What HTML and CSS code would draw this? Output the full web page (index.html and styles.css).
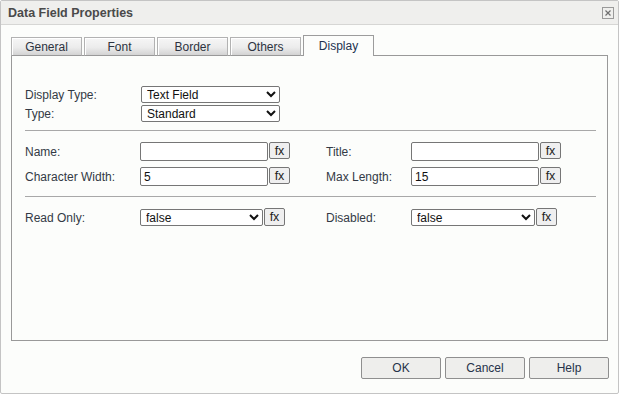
FILE: index.html
```html
<!DOCTYPE html>
<html>
<head>
<meta charset="utf-8">
<link rel="stylesheet" href="styles.css">
</head>
<body>
<div class="dialog">
  <div class="titlebar">
    <span class="title">Data Field Properties</span>
    <span class="close"><svg width="12" height="12" viewBox="0 0 12 12"><rect x="0.5" y="0.5" width="11" height="11" fill="none" stroke="#9a9a9a"/><path d="M3.5 3.5 L8.5 8.5 M8.5 3.5 L3.5 8.5" stroke="#6f6f6f" stroke-width="1.2"/></svg></span>
  </div>
  <div class="tabs">
    <div class="tab">General</div>
    <div class="tab">Font</div>
    <div class="tab">Border</div>
    <div class="tab">Others</div>
    <div class="tab active">Display</div>
  </div>
  <div class="panel">
    <div class="sec sec1">
      <label class="lbl">Display Type:</label>
      <select class="sel wide"><option>Text Field</option></select>
      <label class="lbl">Type:</label>
      <select class="sel wide"><option>Standard</option></select>
    </div>
    <div class="sep"></div>
    <div class="sec sec2">
      <label class="lbl">Name:</label>
      <div class="ctl"><input class="inp" type="text" value=""><button class="fx">fx</button></div>
      <label class="lbl">Title:</label>
      <div class="ctl"><input class="inp" type="text" value=""><button class="fx">fx</button></div>
      <label class="lbl">Character Width:</label>
      <div class="ctl"><input class="inp" type="text" value="5"><button class="fx">fx</button></div>
      <label class="lbl">Max Length:</label>
      <div class="ctl"><input class="inp" type="text" value="15"><button class="fx">fx</button></div>
    </div>
    <div class="sep"></div>
    <div class="sec sec3">
      <label class="lbl">Read Only:</label>
      <div class="ctl c3"><select class="sel narrow"><option>false</option></select><button class="fx fx3">fx</button></div>
      <label class="lbl">Disabled:</label>
      <div class="ctl c3"><select class="sel narrow2"><option>false</option></select><button class="fx fx3">fx</button></div>
    </div>
  </div>
  <div class="footer">
    <button class="btn">OK</button>
    <button class="btn">Cancel</button>
    <button class="btn">Help</button>
  </div>
</div>
</body>
</html>
```

FILE: styles.css
```css
* { box-sizing: border-box; }
html, body { margin: 0; padding: 0; background: #ffffff; }
body {
  font-family: "Liberation Sans", Arial, sans-serif;
  font-size: 12px;
  color: #333333;
}
.dialog {
  width: 619px;
  height: 394px;
  border: 1px solid #c4c4c4;
  border-radius: 2px;
  background: #fcfdfb;
}
.titlebar {
  height: 24px;
  background: #efefed;
  border-bottom: 1px solid #d6d6d4;
  display: flex;
  align-items: center;
  justify-content: space-between;
  padding: 0 4px 0 7px;
}
.title {
  font-weight: bold;
  color: #4a4a4a;
  font-size: 12.5px;
  padding-top: 1px;
}
.close { display: flex; width: 12px; height: 12px; margin-top: 1px; }
.tabs {
  display: flex;
  align-items: flex-end;
  margin: 10px 0 -1px 10px;
  height: 21px;
  position: relative;
  z-index: 1;
}
.tab {
  width: 71px;
  height: 19px;
  margin-right: 2px;
  border: 1px solid #b2b2b2;
  border-bottom-color: #999999;
  box-shadow: inset 1px 1px 0 #ffffff;
  background: linear-gradient(#f6f6f6, #ececec 55%, #d3d3d3);
  display: flex;
  align-items: center;
  justify-content: center;
  color: #2d3340;
  padding-top: 1px;
}
.tab.active {
  height: 21px;
  border-color: #9c9c9c;
  border-bottom: none;
  background: #fcfdfb;
  box-shadow: none;
  color: #22324f;
  padding-top: 0;
}
.panel {
  margin-left: 10px;
  width: 597px;
  height: 286px;
  border: 1px solid #999999;
  padding: 30px 11px 0 13px;
}
.sec {
  display: grid;
  grid-template-columns: 115px 186px 85px auto;
  align-items: center;
}
.sec1 {
  grid-template-columns: 115px auto;
  row-gap: 2px;
}
.sec2 { row-gap: 6px; margin-top: 11px; }
.sec3 { margin-top: 12px; }
.lbl { color: #333a45; }
.sep {
  height: 1px;
  background: #a8a8a8;
  margin-top: 8px;
}
.sec2 + .sep { margin-top: 10px; }
.sel {
  font-family: "Liberation Sans", Arial, sans-serif;
  font-size: 12px;
  color: #111111;
  height: 17px;
  border: 1px solid #767676;
  border-radius: 2px;
  background: #ffffff;
  padding: 0 0 0 1px;
  margin: 0;
}
.wide { width: 139px; margin-left: 1px; }
.narrow { width: 123px; }
.narrow2 { width: 124px; }
.ctl { display: flex; align-items: flex-start; }
.c3 { align-items: center; }
.inp {
  width: 128px;
  height: 19px;
  border: 1px solid #767676;
  border-radius: 2px;
  padding: 0 3px;
  margin: 0;
  font-family: "Liberation Sans", Arial, sans-serif;
  font-size: 12px;
  color: #111111;
  background: #ffffff;
}
.fx {
  width: 21px;
  height: 17px;
  margin: 0 0 0 1px;
  padding: 0;
  border: 1px solid #767676;
  border-radius: 2px;
  background: #efefef;
  font-family: "Liberation Sans", Arial, sans-serif;
  font-size: 12.5px;
  color: #222222;
  line-height: 14px;
}
.fx3 { height: 18px; margin-top: -2px; }
.footer {
  display: flex;
  justify-content: flex-end;
  gap: 4px;
  padding: 16px 9px 0 0;
}
.btn {
  width: 80px;
  height: 22px;
  border: 1px solid #8f8f8f;
  border-radius: 2px;
  background: #eeeeec;
  font-family: "Liberation Sans", Arial, sans-serif;
  font-size: 12px;
  color: #26324a;
  padding: 0;
  margin: 0;
}
```
